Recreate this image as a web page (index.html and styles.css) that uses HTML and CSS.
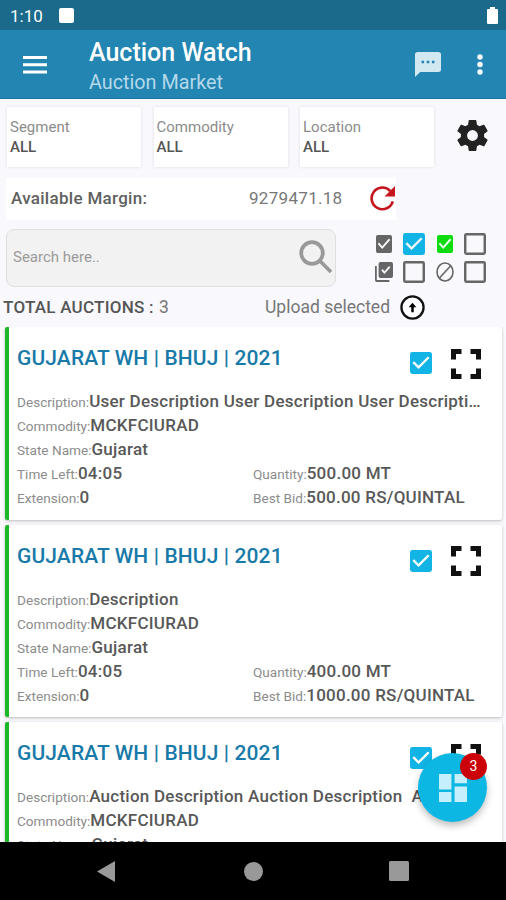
FILE: index.html
```html
<!DOCTYPE html>
<html lang="en">
<head>
	<meta charset="utf-8">
	<title>Auction Watch</title>
	<link rel="stylesheet" href="styles.css">
</head>
<body>
	<!-- shared icons -->
	<svg class="defs" width="0" height="0">
		<symbol id="checked" viewBox="3 3 18 18" preserveAspectRatio="none"><path d="M19 3H5a2 2 0 0 0-2 2v14a2 2 0 0 0 2 2h14a2 2 0 0 0 2-2V5a2 2 0 0 0-2-2zm-9 14l-5-5 1.4-1.4 3.6 3.6 7.6-7.6L19 8z"/></symbol>
		<symbol id="unchecked" viewBox="3 3 18 18"><path d="M19 5v14H5V5h14m0-2H5a2 2 0 0 0-2 2v14a2 2 0 0 0 2 2h14a2 2 0 0 0 2-2V5a2 2 0 0 0-2-2z"/></symbol>
		<symbol id="expand" viewBox="0 0 30 30"><path d="M0 0h10.500v5H5v5.500H0zM19.500 0H30v10.500h-5V5h-5.500zM0 19.500h5V25h5.500v5H0zM25 19.500h5V30H19.500v-5H25z"/></symbol>
	</svg>

	<div class="screen">
		<div class="status">
			<span>1:10</span><i></i>
			<svg width="11" height="17" viewBox="0 0 11 17"><path d="M3 0h5v2h2q1 0 1 1v13q0 1-1 1H1q-1 0-1-1V3q0-1 1-1h2z"/></svg>
		</div>

		<div class="appbar">
			<svg class="menu" width="24" height="18" viewBox="0 0 24 18"><path d="M0 0h24v3H0zM0 7.300h24v3H0zM0 14.600h24v3H0z"/></svg>
			<div class="titles">
				<h1>Auction Watch</h1>
				<p>Auction Market</p>
			</div>
			<svg class="chat" width="26" height="25" viewBox="2 2 20 20" preserveAspectRatio="none"><path d="M20 2H4a2 2 0 0 0-2 2v18l4-4h14a2 2 0 0 0 2-2V4a2 2 0 0 0-2-2zM9 11H7V9h2zm4 0h-2V9h2zm4 0h-2V9h2z"/></svg>
			<svg class="more" width="6" height="21" viewBox="0 0 6 21"><circle cx="3" cy="3" r="2.700"/><circle cx="3" cy="10.500" r="2.700"/><circle cx="3" cy="18" r="2.700"/></svg>
		</div>

		<div class="filters">
			<div class="filter"><span>Segment</span><b>ALL</b></div>
			<div class="filter"><span>Commodity</span><b>ALL</b></div>
			<div class="filter"><span>Location</span><b>ALL</b></div>
			<svg class="gear" width="31" height="31" viewBox="2.200 2 19.600 20"><path d="M19.430 12.980c.04-.32.070-.64.070-.98s-.03-.66-.070-.98l2.110-1.650c.19-.15.240-.42.120-.64l-2-3.460c-.12-.22-.39-.3-.61-.22l-2.490 1c-.52-.4-1.080-.73-1.690-.98l-.38-2.650A.488.488 0 0 0 14 2h-4c-.25 0-.46.180-.49.420l-.38 2.650c-.61.250-1.170.590-1.690.980l-2.490-1c-.23-.09-.49 0-.61.220l-2 3.460c-.13.220-.07.490.12.640l2.110 1.650c-.04.320-.07.650-.07.980s.03.660.070.980l-2.110 1.650c-.19.150-.24.420-.12.640l2 3.460c.12.220.39.300.61.220l2.490-1c.52.400 1.080.730 1.690.980l.38 2.650c.03.240.24.420.49.420h4c.25 0 .46-.18.490-.42l.38-2.650c.61-.25 1.170-.59 1.690-.98l2.490 1c.23.090.49 0 .61-.22l2-3.460c.12-.22.070-.49-.12-.64zM12 15.500a3.500 3.500 0 1 1 0-7 3.500 3.500 0 0 1 0 7z"/></svg>
		</div>

		<div class="margin">
			<b>Available Margin:</b>
			<span>9279471.18</span>
			<svg width="25" height="25" viewBox="0 0 25 25"><path class="arc" d="M22.800 15.300A10.800 10.800 0 1 1 20.300 5"/><path d="M25 0v10.500H14.500z"/></svg>
		</div>

		<div class="tools">
			<div class="search">
				<span>Search here..</span>
				<svg width="34" height="34" viewBox="0 0 34 34"><circle cx="13" cy="13" r="10.800"/><path d="M20.500 20.500l11.500 11.500"/></svg>
			</div>
			<div class="toggles">
				<svg width="16" height="18"><use href="#checked"/></svg>
				<svg class="blue" width="22" height="22"><use href="#checked"/></svg>
				<svg class="green" width="16" height="18"><use href="#checked"/></svg>
				<svg width="22" height="22"><use href="#unchecked"/></svg>
				<svg width="18" height="20" viewBox="2 2 20 20" preserveAspectRatio="none"><path d="M20 2H8a2 2 0 0 0-2 2v12a2 2 0 0 0 2 2h12a2 2 0 0 0 2-2V4a2 2 0 0 0-2-2zm-7.500 12L9 10.500l1.400-1.400 2.100 2.100 5.100-5.100L19 7.500zM4 6H2v14a2 2 0 0 0 2 2h14v-2H4z"/></svg>
				<svg width="22" height="22"><use href="#unchecked"/></svg>
				<svg class="none" width="18" height="20" viewBox="0 0 18 20"><ellipse cx="9" cy="10" rx="8" ry="9"/><path d="M14.500 4l-11 12"/></svg>
				<svg width="22" height="22"><use href="#unchecked"/></svg>
			</div>
		</div>

		<div class="total">
			<b>TOTAL AUCTIONS :</b><span class="count">3</span>
			<span class="upload">Upload selected</span>
			<svg width="25" height="25" viewBox="0 0 26 26"><circle cx="13" cy="13" r="11.500"/><path d="M13 8l4 4.700h-2.700V18h-2.600v-5.300H9z"/></svg>
		</div>

		<div class="list">
			<div class="card">
				<div class="head"><h2>GUJARAT WH | BHUJ | 2021</h2><svg class="tick" width="22" height="22"><use href="#checked"/></svg><svg class="full" width="30" height="30"><use href="#expand"/></svg></div>
				<div class="row"><label>Description:</label><b>User Description User Description User Description</b></div>
				<div class="row"><label>Commodity:</label><b>MCKFCIURAD</b></div>
				<div class="row"><label>State Name:</label><b>Gujarat</b></div>
				<div class="pair">
					<div class="row"><label>Time Left:</label><b>04:05</b></div>
					<div class="row"><label>Quantity:</label><b>500.00 MT</b></div>
				</div>
				<div class="pair">
					<div class="row"><label>Extension:</label><b>0</b></div>
					<div class="row"><label>Best Bid:</label><b>500.00 RS/QUINTAL</b></div>
				</div>
			</div>

			<div class="card">
				<div class="head"><h2>GUJARAT WH | BHUJ | 2021</h2><svg class="tick" width="22" height="22"><use href="#checked"/></svg><svg class="full" width="30" height="30"><use href="#expand"/></svg></div>
				<div class="row"><label>Description:</label><b>Description</b></div>
				<div class="row"><label>Commodity:</label><b>MCKFCIURAD</b></div>
				<div class="row"><label>State Name:</label><b>Gujarat</b></div>
				<div class="pair">
					<div class="row"><label>Time Left:</label><b>04:05</b></div>
					<div class="row"><label>Quantity:</label><b>400.00 MT</b></div>
				</div>
				<div class="pair">
					<div class="row"><label>Extension:</label><b>0</b></div>
					<div class="row"><label>Best Bid:</label><b>1000.00 RS/QUINTAL</b></div>
				</div>
			</div>

			<div class="card">
				<div class="head"><h2>GUJARAT WH | BHUJ | 2021</h2><svg class="tick" width="22" height="22"><use href="#checked"/></svg><svg class="full" width="30" height="30"><use href="#expand"/></svg></div>
				<div class="row"><label>Description:</label><b>Auction Description Auction Description&nbsp; A</b></div>
				<div class="row"><label>Commodity:</label><b>MCKFCIURAD</b></div>
				<div class="row"><label>State Name:</label><b>Gujarat</b></div>
			</div>

			<div class="fab">
				<svg width="28" height="28" viewBox="3 3 18 18"><path d="M3 13h8V3H3zm0 8h8v-6.500H3zm10 0h8V11h-8zm0-18v6h8V3z"/></svg>
				<span class="badge">3</span>
			</div>
		</div>

		<div class="navbar">
			<svg width="18" height="21" viewBox="0 0 18 21"><path d="M18 0v21L0 10.500z"/></svg>
			<svg width="19" height="19" viewBox="0 0 19 19"><circle cx="9.500" cy="9.500" r="9.500"/></svg>
			<svg class="recent" width="20" height="20" viewBox="0 0 20 20"><rect width="20" height="20" rx="1.500"/></svg>
		</div>
	</div>
</body>
</html>
```
FILE: styles.css
```css
* { box-sizing: border-box; }
body {
	margin: 0;
	background: #000;
	font-family: Roboto, "Liberation Sans", sans-serif;
	color: #666;
}
h1, h2, p { margin: 0; }
b, h1, h2 { font-weight: 500; }
svg { display: block; flex: none; }
.defs { position: absolute; }
.screen {
	width: 506px;
	height: 900px;
	display: flex;
	flex-direction: column;
	background: #f9f9fd;
	overflow: hidden;
}

.status {
	height: 30px;
	flex: none;
	display: flex;
	align-items: center;
	padding: 1px 8px 0 10px;
	background: #1b698b;
	color: #fff;
	font-size: 17px;
}
.status i { width: 15px; height: 15px; margin-left: 16px; border-radius: 2px; background: #fff; }
.status svg { margin-left: auto; fill: #fff; }

.appbar {
	height: 69px;
	flex: none;
	display: flex;
	align-items: center;
	padding: 0 23px;
	background: #2285b2;
	border-bottom: 1px solid #1c76a1;
	fill: #fff;
}
.titles { flex: 1; margin-left: 42px; padding-top: 7px; }
.titles h1 { font-size: 25px; line-height: 30px; color: #fff; }
.titles p { font-size: 19.8px; line-height: 29px; color: #b5d9ea; }
.menu { margin-top: 1px; }
.chat { margin-right: 36px; fill: #d2e9f2; }

.filters { height: 68px; flex: none; display: flex; align-items: flex-end; padding-left: 7px; }
.filter {
	width: 134px;
	height: 60px;
	margin-right: 12.5px;
	padding: 10px 3px;
	background: #fff;
	box-shadow: 0 0 3px #dcdce2;
	font-size: 15px;
	line-height: 20px;
}
.filter span { display: block; color: #8c8c8c; }
.filter b { display: block; color: #555; }
.gear { margin: 0 0 16px 10px; fill: #222; }

.margin {
	width: 390px;
	height: 42px;
	flex: none;
	display: flex;
	align-items: center;
	margin: 11px 0 0 6px;
	padding: 0 0 2px 5px;
	background: #fff;
	font-size: 17px;
	letter-spacing: .3px;
}
.margin b { width: 238px; color: #606060; }
.margin span { width: 121px; color: #777; }
.margin svg { fill: #c5161d; }
.margin .arc { fill: none; stroke: #c5161d; stroke-width: 2.6; }

.tools { height: 58px; flex: none; display: flex; margin: 9px 0 0 6px; }
.search {
	width: 330px;
	height: 58px;
	display: flex;
	align-items: center;
	justify-content: space-between;
	padding: 0 2px 2px 6px;
	border: 1.5px solid #dfdfdf;
	border-radius: 8px;
	background: #f2f2f2;
	font-size: 15px;
	color: #9b9b9b;
}
.search svg { fill: none; stroke: #999; stroke-width: 3.8; }
.toggles {
	display: grid;
	grid-template: 28.5px 28.5px / repeat(4, 30.3px);
	place-items: center;
	margin: .5px 0 0 33px;
	fill: #666;
}
.toggles .blue { fill: #12b4e6; }
.toggles .green { fill: #0fdc0f; }
.toggles .none { fill: none; stroke: #666; stroke-width: 1.6; }

.total { height: 40px; flex: none; display: flex; align-items: center; padding-left: 3px; font-size: 17.5px; }
.total b { width: 156px; font-size: 17px; letter-spacing: .25px; color: #555; }
.count { width: 106px; color: #777; }
.upload { width: 135px; color: #777; }
.total circle { fill: #fff; stroke: #111; stroke-width: 2.4; }

.list { position: relative; flex: 1; min-height: 0; padding: 0 4px 0 5px; overflow: hidden; }
.card {
	height: 192.700px;
	margin-bottom: 5px;
	padding: 12px 19px 0 8px;
	border-left: 4px solid #1cb82a;
	border-radius: 2px;
	background: #fff;
	box-shadow: 0 1px 3px #bbb;
}
.head { display: flex; height: 50px; }
.head h2 { flex: 1; font-size: 21px; line-height: 38px; letter-spacing: .12px; color: #187aa8; }
.tick { margin: 13px 18.500px 0 0; fill: #12b4e6; }
.full { margin: 9.500px 2.500px 0 0; fill: #111; }
.row { display: flex; align-items: baseline; height: 24px; line-height: 24px; white-space: nowrap; }
.row label { font-size: 13.6px; color: #8c8c8c; }
.row b { font-size: 17px; letter-spacing: .25px; color: #585858; overflow: hidden; text-overflow: ellipsis; }
.pair { display: grid; grid-template-columns: 236px 1fr; }

.fab {
	position: absolute;
	left: 418px;
	top: 426px;
	width: 69px;
	height: 69px;
	display: grid;
	place-items: center;
	border-radius: 50%;
	background: #0db7e4;
	box-shadow: 0 4px 7px rgba(0, 0, 0, .25);
}
.fab svg { fill: #c5f0fb; }
.badge {
	position: absolute;
	right: 0;
	top: 0;
	width: 27px;
	border-radius: 50%;
	background: #cb0009;
	color: #fff;
	font-size: 14px;
	line-height: 27px;
	text-align: center;
}

.navbar {
	height: 58px;
	flex: none;
	display: flex;
	align-items: center;
	gap: 129px;
	padding-left: 97px;
	background: #000;
	fill: #999;
}
.recent { margin-left: -3px; }
```
